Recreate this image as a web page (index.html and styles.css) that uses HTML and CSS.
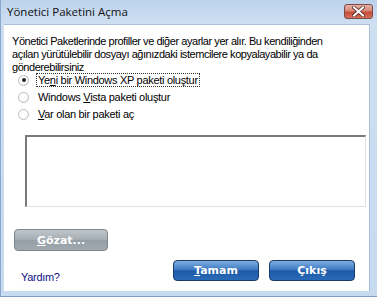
FILE: index.html
```html
<!DOCTYPE html>
<html lang="tr">
<head>
    <meta charset="UTF-8">
    <meta name="viewport" content="width=device-width, initial-scale=1.0">
    <link rel="stylesheet" href="styles.css">
    <title>Yönetici Paketini Açma</title>
</head>
<body>
    <div class="window">
        <!-- title bar -->
        <div class="titlebar">
            <span class="title">Yönetici Paketini Açma</span>
            <button class="close-btn" type="button" aria-label="Kapat">
                <svg width="13" height="11" viewBox="0 0 13 11">
                    <path d="M2 1.5 L11 9.5 M11 1.5 L2 9.5" stroke="#5a2a24" stroke-width="3.6" stroke-linecap="square"/>
                    <path d="M2 1.5 L11 9.5 M11 1.5 L2 9.5" stroke="#fff" stroke-width="2" stroke-linecap="square"/>
                </svg>
            </button>
        </div>

        <div class="client">
            <p class="intro">Yönetici Paketlerinde profiller ve diğer ayarlar yer alır. Bu kendiliğinden<br>açılan yürütülebilir dosyayı ağınızdaki istemcilere kopyalayabilir ya da<br>gönderebilirsiniz</p>

            <div class="options">
                <label class="option">
                    <span class="radio checked"></span>
                    <span class="option-text focused">Ye<u>n</u>i bir Windows XP paketi oluştur</span>
                </label>
                <label class="option">
                    <span class="radio"></span>
                    <span class="option-text">Windows <u>V</u>ista paketi oluştur</span>
                </label>
                <label class="option">
                    <span class="radio"></span>
                    <span class="option-text"><u>V</u>ar olan bir paketi aç</span>
                </label>
            </div>

            <div class="path-box"></div>

            <button class="btn btn-gray" type="button"><u>G</u>özat...</button>

            <div class="footer">
                <a class="help-link" href="#">Yardım?</a>
                <div class="actions">
                    <button class="btn btn-blue" type="button"><u>T</u>amam</button>
                    <button class="btn btn-blue" type="button">Çıkış</button>
                </div>
            </div>
        </div>
    </div>
</body>
</html>
```

FILE: styles.css
```css
* {
  margin: 0;
  padding: 0;
  box-sizing: border-box;
}

body {
  width: 377px;
  height: 297px;
  overflow: hidden;
  font-family: 'Liberation Sans', Arial, sans-serif;
  background-color: #c4d8ee;
}

.window {
  width: 377px;
  height: 297px;
  display: flex;
  flex-direction: column;
  background: linear-gradient(to bottom, #bcd2eb 0px, #cfdff2 24px, #c6daf0 100%);
  border-left: 1px solid #8aa8cc;
  border-bottom: 1px solid #7f9ec4;
  padding: 0 7px 5px 3px;
}

.titlebar {
  height: 24px;
  display: flex;
  align-items: center;
  justify-content: space-between;
  padding: 0 0 2px 3px;
}

.title {
  font-family: 'Open Sans', 'Noto Sans', sans-serif;
  font-size: 11.5px;
  color: #111;
}

.close-btn {
  width: 29px;
  height: 15px;
  margin-top: 1px;
  margin-right: -3px;
  display: flex;
  align-items: center;
  justify-content: center;
  border: 1px solid #7b4a44;
  border-radius: 3px;
  background: linear-gradient(to bottom, #e7b1a6 0%, #d8897a 45%, #c44a36 55%, #d7705b 100%);
}

.client {
  flex: 1;
  display: flex;
  flex-direction: column;
  background-color: #fff;
  border-top: 1px solid #a7bfdc;
  border-right: 1px solid #a7bfdc;
  padding: 10px 0 0 8px;
  font-size: 11px;
  color: #000;
}

.intro {
  line-height: 13px;
  font-size: 11px;
  letter-spacing: -0.45px;
  white-space: nowrap;
}

.options {
  display: flex;
  flex-direction: column;
  gap: 3px;
  margin-top: -1px;
  padding-left: 6px;
}

.option {
  display: flex;
  align-items: center;
  gap: 7px;
  height: 14px;
  letter-spacing: -0.3px;
}

.radio {
  width: 11px;
  height: 11px;
  border-radius: 50%;
  border: 1px solid #b9bcc0;
  background: radial-gradient(circle at 40% 40%, #fff 0%, #fff 45%, #e8eaec 100%);
  display: flex;
  align-items: center;
  justify-content: center;
}

.radio.checked::after {
  content: "";
  width: 4px;
  height: 4px;
  border-radius: 50%;
  background-color: #222;
}

.option-text {
  padding: 0 1px;
  border: 1px dotted transparent;
  line-height: 12px;
}

.option-text.focused {
  border-color: #333;
}

.path-box {
  width: 341px;
  height: 72px;
  margin: 14px 0 0 13px;
  background-color: #fff;
  border-top: 2px solid #7a7a7a;
  border-left: 2px solid #7a7a7a;
  border-right: 1px solid #e2e2e2;
  border-bottom: 1px solid #e2e2e2;
}

.btn {
  height: 21px;
  border-radius: 4px;
  color: #fff;
  font-family: 'DejaVu Sans', Verdana, sans-serif;
  font-weight: bold;
  font-size: 11px;
  cursor: pointer;
}

.btn-gray {
  width: 94px;
  height: 22px;
  margin: 22px 0 0 2px;
  border: 1px solid #7f878e;
  background: linear-gradient(to bottom, #bfc6cc 0%, #a4acb3 50%, #959ea6 51%, #a1a9b0 100%);
}

.footer {
  display: flex;
  justify-content: space-between;
  align-items: center;
  margin-top: 7px;
  padding-left: 9px;
  padding-right: 14px;
}

.help-link {
  color: #10108a;
  text-decoration: none;
  font-size: 11px;
  margin-top: 13px;
  letter-spacing: -0.3px;
}

.actions {
  display: flex;
  gap: 10px;
}

.btn-blue {
  width: 86px;
  border: 1px solid #1c3d6c;
  background: linear-gradient(to bottom, #7eaee0 0%, #3f7ac4 45%, #1d5aa8 52%, #2a6bb8 100%);
}
```
